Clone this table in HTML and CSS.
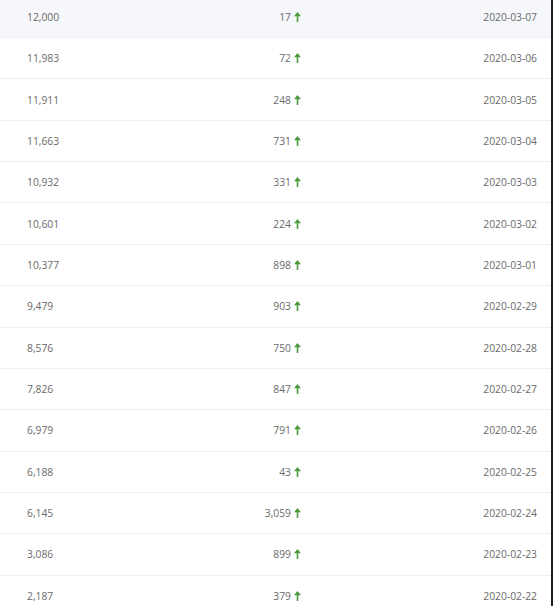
FILE: index.html
```html
<!DOCTYPE html>
<html>
<head>
<meta charset="utf-8">
<link rel="stylesheet" href="styles.css">
</head>
<body>
<div class="frame">
  <div class="table">
    <div class="row hover"><span class="c1">12,000</span><span class="c2">17<svg class="up" viewBox="0 0 7 10"><path d="M3.5 0 L7 4.2 L4.3 4.2 L4.3 10 L2.7 10 L2.7 4.2 L0 4.2 Z"/></svg></span><span class="c3">2020-03-07</span></div>
    <div class="row"><span class="c1">11,983</span><span class="c2">72<svg class="up" viewBox="0 0 7 10"><path d="M3.5 0 L7 4.2 L4.3 4.2 L4.3 10 L2.7 10 L2.7 4.2 L0 4.2 Z"/></svg></span><span class="c3">2020-03-06</span></div>
    <div class="row"><span class="c1">11,911</span><span class="c2">248<svg class="up" viewBox="0 0 7 10"><path d="M3.5 0 L7 4.2 L4.3 4.2 L4.3 10 L2.7 10 L2.7 4.2 L0 4.2 Z"/></svg></span><span class="c3">2020-03-05</span></div>
    <div class="row"><span class="c1">11,663</span><span class="c2">731<svg class="up" viewBox="0 0 7 10"><path d="M3.5 0 L7 4.2 L4.3 4.2 L4.3 10 L2.7 10 L2.7 4.2 L0 4.2 Z"/></svg></span><span class="c3">2020-03-04</span></div>
    <div class="row"><span class="c1">10,932</span><span class="c2">331<svg class="up" viewBox="0 0 7 10"><path d="M3.5 0 L7 4.2 L4.3 4.2 L4.3 10 L2.7 10 L2.7 4.2 L0 4.2 Z"/></svg></span><span class="c3">2020-03-03</span></div>
    <div class="row"><span class="c1">10,601</span><span class="c2">224<svg class="up" viewBox="0 0 7 10"><path d="M3.5 0 L7 4.2 L4.3 4.2 L4.3 10 L2.7 10 L2.7 4.2 L0 4.2 Z"/></svg></span><span class="c3">2020-03-02</span></div>
    <div class="row"><span class="c1">10,377</span><span class="c2">898<svg class="up" viewBox="0 0 7 10"><path d="M3.5 0 L7 4.2 L4.3 4.2 L4.3 10 L2.7 10 L2.7 4.2 L0 4.2 Z"/></svg></span><span class="c3">2020-03-01</span></div>
    <div class="row"><span class="c1">9,479</span><span class="c2">903<svg class="up" viewBox="0 0 7 10"><path d="M3.5 0 L7 4.2 L4.3 4.2 L4.3 10 L2.7 10 L2.7 4.2 L0 4.2 Z"/></svg></span><span class="c3">2020-02-29</span></div>
    <div class="row"><span class="c1">8,576</span><span class="c2">750<svg class="up" viewBox="0 0 7 10"><path d="M3.5 0 L7 4.2 L4.3 4.2 L4.3 10 L2.7 10 L2.7 4.2 L0 4.2 Z"/></svg></span><span class="c3">2020-02-28</span></div>
    <div class="row"><span class="c1">7,826</span><span class="c2">847<svg class="up" viewBox="0 0 7 10"><path d="M3.5 0 L7 4.2 L4.3 4.2 L4.3 10 L2.7 10 L2.7 4.2 L0 4.2 Z"/></svg></span><span class="c3">2020-02-27</span></div>
    <div class="row"><span class="c1">6,979</span><span class="c2">791<svg class="up" viewBox="0 0 7 10"><path d="M3.5 0 L7 4.2 L4.3 4.2 L4.3 10 L2.7 10 L2.7 4.2 L0 4.2 Z"/></svg></span><span class="c3">2020-02-26</span></div>
    <div class="row"><span class="c1">6,188</span><span class="c2">43<svg class="up" viewBox="0 0 7 10"><path d="M3.5 0 L7 4.2 L4.3 4.2 L4.3 10 L2.7 10 L2.7 4.2 L0 4.2 Z"/></svg></span><span class="c3">2020-02-25</span></div>
    <div class="row"><span class="c1">6,145</span><span class="c2">3,059<svg class="up" viewBox="0 0 7 10"><path d="M3.5 0 L7 4.2 L4.3 4.2 L4.3 10 L2.7 10 L2.7 4.2 L0 4.2 Z"/></svg></span><span class="c3">2020-02-24</span></div>
    <div class="row"><span class="c1">3,086</span><span class="c2">899<svg class="up" viewBox="0 0 7 10"><path d="M3.5 0 L7 4.2 L4.3 4.2 L4.3 10 L2.7 10 L2.7 4.2 L0 4.2 Z"/></svg></span><span class="c3">2020-02-23</span></div>
    <div class="row"><span class="c1">2,187</span><span class="c2">379<svg class="up" viewBox="0 0 7 10"><path d="M3.5 0 L7 4.2 L4.3 4.2 L4.3 10 L2.7 10 L2.7 4.2 L0 4.2 Z"/></svg></span><span class="c3">2020-02-22</span></div>
  </div>
</div>
</body>
</html>
```

FILE: styles.css
```css
html, body {
  margin: 0;
  padding: 0;
  background: #fff;
  overflow: hidden;
}
.frame {
  width: 551px;
  height: 606px;
  border-right: 2px solid #1e1e1e;
  overflow: hidden;
}
.table {
  margin-top: -3.36px;
  font-family: "Open Sans", "Noto Sans", sans-serif;
  font-size: 10.3px;
  color: #6a6a6a;
}
.row {
  display: grid;
  grid-template-columns: 200px 101px 1fr;
  align-items: center;
  height: 40.36px;
  border-bottom: 1px solid #ebeef5;
}
.row.hover {
  background: #f5f7fa;
}
.c1 {
  padding-left: 27px;
}
.c2 {
  display: flex;
  justify-content: flex-end;
  align-items: center;
  gap: 3px;
}
.c3 {
  text-align: right;
  padding-right: 14px;
}
.up {
  width: 7px;
  height: 10px;
  fill: #4a9a3c;
}
```
